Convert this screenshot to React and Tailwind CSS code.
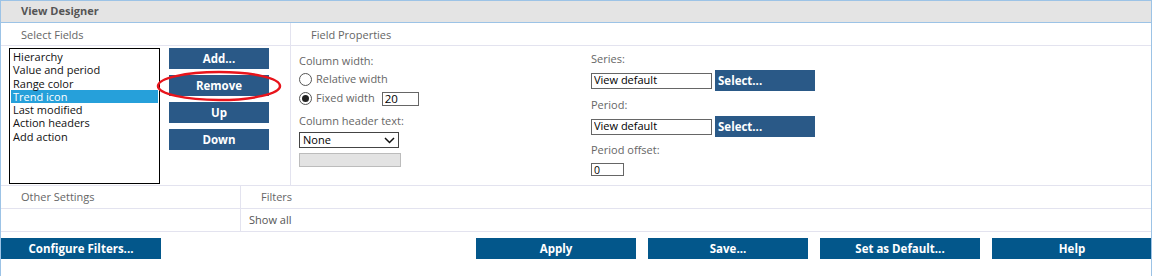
import React from 'react';

const font = { fontFamily: '"Open Sans", "Noto Sans", sans-serif' };

const fields = ['Hierarchy', 'Value and period', 'Range color', 'Trend icon', 'Last modified', 'Action headers', 'Add action'];

function SideButton({ children, ring }) {
    return (
        <div className="relative">
            <button className="w-[100px] h-[21px] bg-[#2a5987] text-white text-[11.5px] font-bold leading-none">{children}</button>
            {ring && (
                <svg className="absolute -left-[13px] -top-[5px] pointer-events-none" width="126" height="32" viewBox="0 0 126 32">
                    <ellipse cx="63" cy="16" rx="61" ry="14" fill="none" stroke="#e8141b" strokeWidth="2.5" />
                </svg>
            )}
        </div>
    );
}

function Radio({ checked, label }) {
    return (
        <div className="flex items-center h-[19px] gap-[4px]">
            <span className="w-[13px] h-[13px] rounded-full border border-[#555] bg-white flex items-center justify-center">
                {checked && <span className="w-[7px] h-[7px] rounded-full bg-[#222]"></span>}
            </span>
            <span className="text-[#666]">{label}</span>
        </div>
    );
}

function BottomButton({ children }) {
    return (
        <button className="w-[160px] h-[21px] bg-[#03578b] text-white text-[11.5px] font-bold leading-none">{children}</button>
    );
}

export default function App() {
    return (
        <div style={font} className="w-[1152px] h-[276px] bg-white border-t border-l border-r border-[#9cc3e6] text-[11px] overflow-hidden">
            {/* Title */}
            <div className="h-[22px] bg-[#e4e4e4] border-b border-[#9cc3e6] pl-[20px] flex items-center font-bold text-[#555]">
                View Designer
            </div>

            {/* Fields */}
            <div className="flex border-b border-[#e3e3ef]">
                <div className="w-[290px] border-r border-[#e3e3ef]">
                    <div className="h-[23px] border-b border-[#e3e3ef] pl-[20px] pt-[2px] flex items-center text-[#666]">Select Fields</div>
                    <div className="h-[139px] flex pl-[8px] pt-[2px] gap-[9px]">
                        <div className="w-[151px] h-[136px] border border-black pt-[1px] px-[1px] leading-[13.3px] text-[#111]">
                            {fields.map((f) => (
                                <div key={f} className={f === 'Trend icon' ? 'bg-[#26a0da] text-white pl-[2px]' : 'pl-[2px]'}>{f}</div>
                            ))}
                        </div>
                        <div className="flex flex-col gap-[6px]">
                            <SideButton>Add...</SideButton>
                            <SideButton ring>Remove</SideButton>
                            <SideButton>Up</SideButton>
                            <SideButton>Down</SideButton>
                        </div>
                    </div>
                </div>
                <div className="flex-1">
                    <div className="h-[23px] border-b border-[#e3e3ef] pl-[20px] pt-[2px] flex items-center text-[#666]">Field Properties</div>
                    <div className="h-[139px] flex pl-[8px]">
                        <div className="w-[292px] pt-[6px]">
                            <div className="text-[#666] h-[18px] leading-[18px]">Column width:</div>
                            <Radio label="Relative width" />
                            <div className="flex items-center">
                                <Radio checked label="Fixed width" />
                                <input readOnly value="20" className="ml-[7px] w-[37px] h-[14px] border border-[#666] px-[2px] text-[11.5px] text-black outline-none" />
                            </div>
                            <div className="text-[#666] h-[18px] leading-[18px] mt-[4px]">Column header text:</div>
                            <div className="mt-[2px] w-[100px] h-[16px] border border-[#444] flex items-center justify-between px-[3px] text-black">
                                <span>None</span>
                                <svg width="11" height="7" viewBox="0 0 11 7"><path d="M1 1l4.5 4.5L10 1" fill="none" stroke="#111" strokeWidth="1.5" /></svg>
                            </div>
                            <div className="mt-[5px] w-[102px] h-[14px] bg-[#e3e3e3] border border-[#bcbcbc]"></div>
                        </div>
                        <div className="pt-[4px]">
                            <div className="text-[#666] h-[18px] leading-[18px]">Series:</div>
                            <div className="flex items-center gap-[3px] mt-[2px]">
                                <input readOnly value="View default" className="w-[121px] h-[16px] border border-[#666] px-[2px] text-[11px] text-black outline-none" />
                                <button className="w-[100px] h-[21px] bg-[#2a5987] text-white text-[11.5px] font-bold text-left pl-[3px] leading-none">Select...</button>
                            </div>
                            <div className="text-[#666] h-[18px] leading-[18px] mt-[5px]">Period:</div>
                            <div className="flex items-center gap-[3px] mt-[2px]">
                                <input readOnly value="View default" className="w-[121px] h-[16px] border border-[#666] px-[2px] text-[11px] text-black outline-none" />
                                <button className="w-[100px] h-[21px] bg-[#2a5987] text-white text-[11.5px] font-bold text-left pl-[3px] leading-none">Select...</button>
                            </div>
                            <div className="text-[#666] h-[18px] leading-[18px] mt-[4px]">Period offset:</div>
                            <input readOnly value="0" className="block mt-[4px] w-[33px] h-[13px] border border-[#666] px-[2px] text-[10.5px] leading-none text-black outline-none" />
                        </div>
                    </div>
                </div>
            </div>

            {/* Other settings / Filters */}
            <div className="flex border-b border-[#e3e3ef]">
                <div className="w-[240px] border-r border-[#e3e3ef]">
                    <div className="h-[23px] border-b border-[#e3e3ef] pl-[20px] pt-[1px] flex items-center text-[#666]">Other Settings</div>
                    <div className="h-[22px]"></div>
                </div>
                <div className="flex-1">
                    <div className="h-[23px] border-b border-[#e3e3ef] pl-[20px] pt-[1px] flex items-center text-[#666]">Filters</div>
                    <div className="h-[22px] pl-[8px] pt-[1px] flex items-center text-[#555]">Show all</div>
                </div>
            </div>

            {/* Actions */}
            <div className="flex mt-[6px]">
                <BottomButton>Configure Filters...</BottomButton>
                <div className="flex-1"></div>
                <div className="flex gap-[12px] -mr-[1px]">
                    <BottomButton>Apply</BottomButton>
                    <BottomButton>Save...</BottomButton>
                    <BottomButton>Set as Default...</BottomButton>
                    <BottomButton>Help</BottomButton>
                </div>
            </div>
        </div>
    );
}
